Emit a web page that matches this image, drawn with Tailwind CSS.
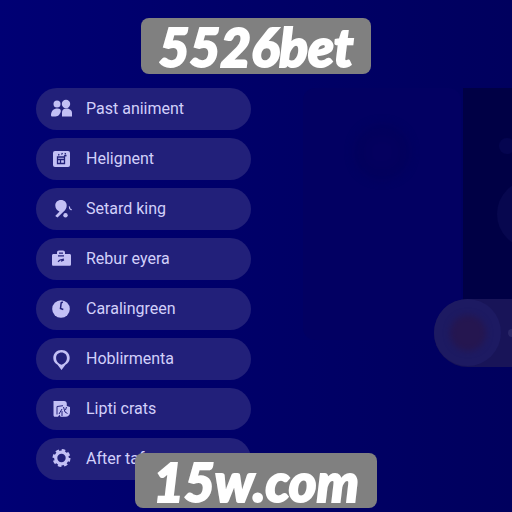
<!DOCTYPE html>
<html lang="en">
<head>
  <meta charset="UTF-8" />
  <meta name="viewport" content="width=device-width, initial-scale=1.0" />
  <title>5526bet</title>
  <script src="https://cdn.jsdelivr.net/npm/@tailwindcss/browser@4"></script>
</head>
<body class="relative min-h-screen overflow-hidden bg-linear-to-r from-[#000074] via-[#000068] to-[#00005e] font-[Roboto,sans-serif]">

  <header class="flex justify-center pt-[18px]">
    <h1 class="flex h-14 items-center rounded-lg bg-[#808080] px-[18px] pt-0.5 font-[Lato,sans-serif] text-[53px] font-black italic text-white [-webkit-text-stroke:2px_white]">5526bet</h1>
  </header>

  <main class="flex gap-[52px] pt-[14px] pl-9">
    <!-- Menu -->
    <nav class="flex w-[215px] shrink-0 flex-col gap-2 text-base text-[#d2d0fa]">
      <button class="flex h-[42px] items-center gap-3 rounded-full bg-[#22207a] pl-3.5 text-left">
        <svg class="size-6 fill-[#c3c0f5]" viewBox="0 0 24 24">
          <circle cx="7" cy="7" r="3.5" />
          <circle cx="16" cy="7" r="4.2" />
          <path d="M1 18c0-3.800 2.500-6.500 6.500-6.500 2.500 0 3.500 1.300 3.300 2.800-.3 2.200-2.300 5.200-5.300 5.200H2.500c-1 0-1.500-.5-1.500-1.500z" />
          <path d="M12 19.500v-4c0-2.500 1.700-4 4.500-4s5.500 1.700 5.500 4.500v3.500z" />
        </svg>
        Past aniiment
      </button>
      <button class="flex h-[42px] items-center gap-3 rounded-full bg-[#22207a] pl-3.5 text-left">
        <svg class="size-6 fill-[#c3c0f5]" viewBox="0 0 24 24">
          <rect x="3" y="4" width="17" height="16" rx="2" />
          <g class="fill-none stroke-[#22207a]" stroke-width="1.300">
            <path d="M7.500 10h7v6.500h-7zM8 12.500h7M10.500 13v3.500M14 9l2.500-.5M8.500 8.500l.5-1.500M11.500 7.500l1-1.500M15 7.500l.5-1.500" />
          </g>
        </svg>
        Helignent
      </button>
      <button class="flex h-[42px] items-center gap-3 rounded-full bg-[#22207a] pl-3.5 text-left">
        <svg class="size-6 fill-[#c3c0f5]" viewBox="0 0 24 24">
          <path d="M11 3c3.500 0 5.700 2.400 5.700 5.500 0 3-1.500 4.600-3 6L7.500 20.500l-2.300-1.500 4.300-4.500C7 13.500 5.300 11.500 5.300 8.500 5.300 5.400 7.500 3 11 3z" />
          <circle cx="15.500" cy="18.300" r="2.200" />
          <path d="M18.800 9l1.200.8.3 1.600 1.700.8-.8 1.300-2-1.500z" />
        </svg>
        Setard king
      </button>
      <button class="flex h-[42px] items-center gap-3 rounded-full bg-[#22207a] pl-3.5 text-left">
        <svg class="size-6 fill-[#c3c0f5]" viewBox="0 0 24 24">
          <path fill-rule="evenodd" d="M7 7V5.500C7 4.200 7.800 3.500 9 3.500h4c1.200 0 2 .7 2 2V7h4.500c.9 0 1.500.6 1.500 1.500v8.700c0 1-.6 1.600-1.500 1.600h-16c-1 0-1.500-.6-1.500-1.600V8.500C2 7.600 2.600 7 3.500 7zm2-.2h4v-1.300H9z" />
          <path class="fill-none stroke-[#22207a]" stroke-width="1.200" d="M8 8.800h6M8 14.800l2-1.800 4-.8M11 14.300l3-1.300" />
        </svg>
        Rebur eyera
      </button>
      <button class="flex h-[42px] items-center gap-3 rounded-full bg-[#22207a] pl-3.5 text-left">
        <svg class="size-6 fill-[#c3c0f5]" viewBox="0 0 24 24">
          <circle cx="11" cy="12" r="8.800" />
          <path class="fill-none stroke-[#22207a]" stroke-width="1.500" d="M11.200 5.500l-.7 6 2.800 1M10.800 6l2-1" />
        </svg>
        Caralingreen
      </button>
      <button class="flex h-[42px] items-center gap-3 rounded-full bg-[#22207a] pl-3.5 text-left">
        <svg class="size-6 fill-[#c3c0f5]" viewBox="0 0 24 24">
          <path fill-rule="evenodd" d="M11.500 3c4.800 0 8.200 3.500 8.200 8 0 3-1.700 5.400-4.200 6.800L11.500 23l-4-5.200C5 16.400 3.300 14 3.300 11c0-4.500 3.400-8 8.200-8zm0 2.600c-3.300 0-5.400 2.300-5.400 5.400 0 3.200 2.300 5.800 5.400 6.800 3.100-1 5.400-3.600 5.400-6.800 0-3.100-2.100-5.400-5.400-5.400z" />
        </svg>
        Hoblirmenta
      </button>
      <button class="flex h-[42px] items-center gap-3 rounded-full bg-[#22207a] pl-3.5 text-left">
        <svg class="size-6 fill-[#c3c0f5]" viewBox="0 0 24 24">
          <path d="M3.500 4h10.500c1.800 0 2.800 1.200 2.800 3v2l3.200 1v5.500c0 2.600-1.800 4.300-4.500 4.300H10.500l-1-2-1.500 2H5c-1 0-1.500-.6-1.500-1.500z" />
          <path class="fill-none stroke-[#22207a]" stroke-width="1" d="M7 17.500V9.500l6-.8M9 17l3-5M12 14v5M13.500 10l1.500 5 2.500 1.500M16.500 10l-1 3" />
        </svg>
        Lipti crats
      </button>
      <button class="flex h-[42px] items-center gap-3 rounded-full bg-[#22207a] pl-3.5 text-left">
        <svg class="size-6 fill-none stroke-[#c3c0f5]" viewBox="0 0 24 24">
          <circle cx="11.500" cy="11" r="5.800" stroke-width="3.200" />
          <circle cx="11.500" cy="11" r="7.600" stroke-width="2.800" stroke-dasharray="3.400 2.569" />
        </svg>
        After taft
      </button>
    </nav>

    <!-- Dimmed panels -->
    <div class="flex min-w-0 flex-1 overflow-hidden" aria-hidden="true">
      <div class="flex h-[252px] w-[158px] shrink-0 justify-center rounded-xl bg-[#020062] pt-9">
        <div class="size-14 rounded-full bg-radial from-[#050060] to-[#00005a] blur-[4px]"></div>
      </div>
      <div class="relative ml-0.5 h-[212px] min-w-0 flex-1 bg-[#000045]">
        <div class="absolute top-[50px] left-9 size-4 rounded-full bg-[#050550]"></div>
        <div class="absolute top-[92px] left-[34px] size-[68px] rounded-full bg-[#07074f]"></div>
        <div class="absolute top-[211px] right-0 -left-[29px] h-[68px] rounded-l-full bg-[#181458]">
          <div class="flex size-[67px] items-center justify-center rounded-full bg-[#1d1a62]">
            <div class="size-9 rounded-full bg-[#251650] blur-[3px]"></div>
          </div>
          <div class="absolute top-[30px] right-0 h-2 w-1 rounded-l-full bg-[#2a2768]"></div>
        </div>
      </div>
    </div>
  </main>

  <footer class="absolute inset-x-0 bottom-1 flex justify-center">
    <p class="flex h-[55px] items-center rounded-lg bg-[#808080] px-[18px] pt-0.5 font-[Lato,sans-serif] text-[53px] font-black italic text-white [-webkit-text-stroke:2px_white]">15w.com</p>
  </footer>

</body>
</html>
